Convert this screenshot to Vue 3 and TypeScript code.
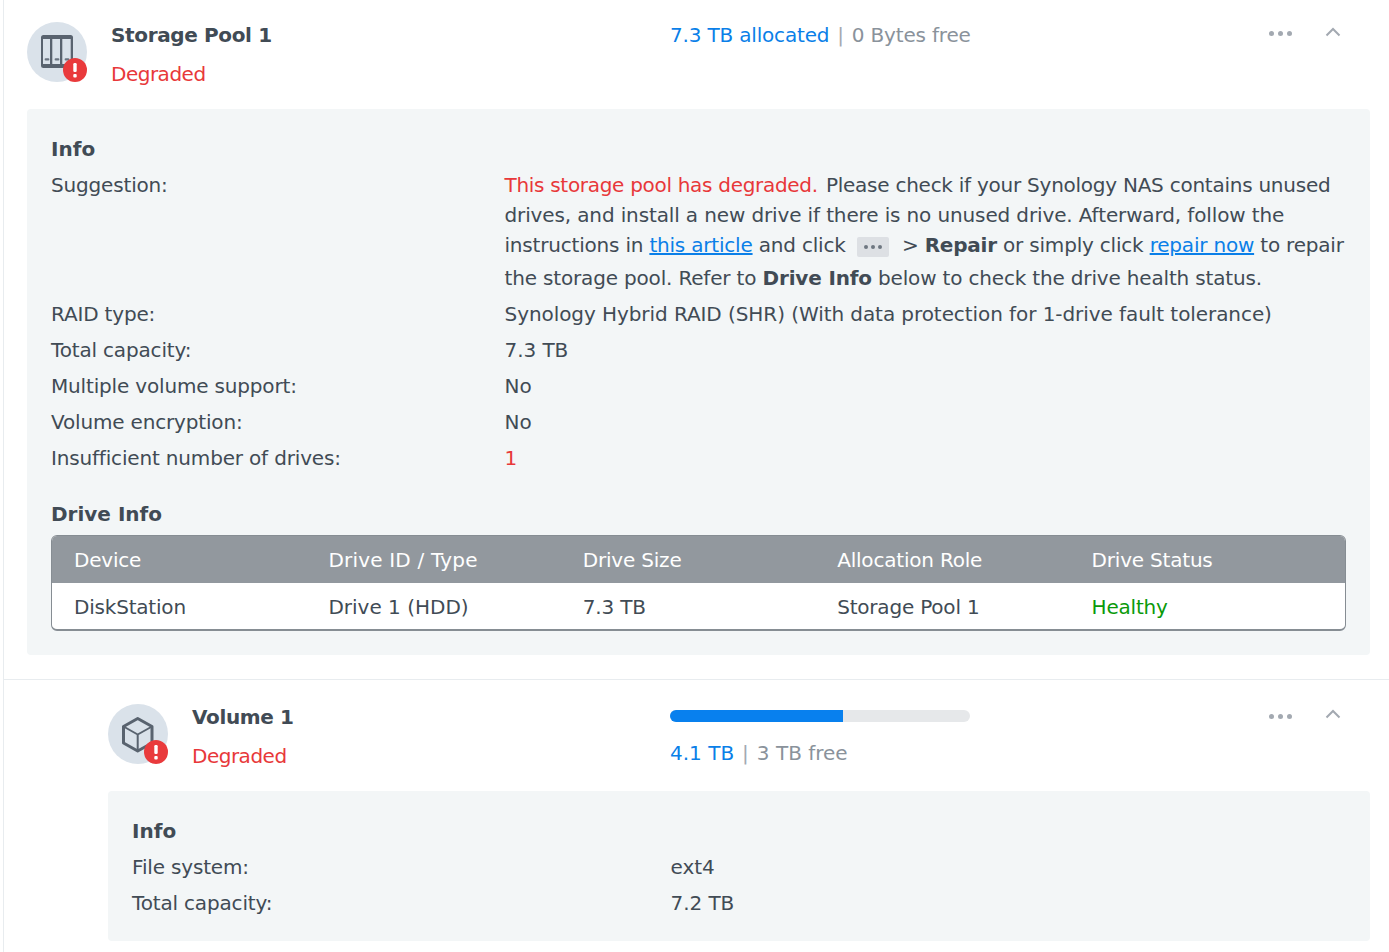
<script setup lang="ts">
const driveColumns = ['Device', 'Drive ID / Type', 'Drive Size', 'Allocation Role', 'Drive Status']
const poolRows = [
  { label: 'RAID type:', value: 'Synology Hybrid RAID (SHR) (With data protection for 1-drive fault tolerance)' },
  { label: 'Total capacity:', value: '7.3 TB' },
  { label: 'Multiple volume support:', value: 'No' },
  { label: 'Volume encryption:', value: 'No' },
  { label: 'Insufficient number of drives:', value: '1', danger: true },
]
const volumeRows = [
  { label: 'File system:', value: 'ext4' },
  { label: 'Total capacity:', value: '7.2 TB' },
]
const usedPercent = 57.7
</script>

<template>
  <main class="page">
    <section class="pool">
      <header class="head">
        <div class="avatar">
          <svg class="glyph" width="60" height="60" viewBox="0 0 60 60">
            <rect x="14" y="13" width="32" height="33" rx="2.500" fill="#59636f" />
            <path d="M16 17h7v25h-7ZM25.300 17h7.700v25h-7.700ZM35.300 17h8.400v25h-8.400Z" fill="#dae2ea" />
            <path d="M18.700 37.400h2.600M28.700 37.400h2.600M38.700 37.400h2.600" stroke="#6b7480" stroke-width="2.200" stroke-linecap="round" />
            <circle cx="48" cy="48" r="12" fill="#e93a3c" />
            <rect x="46.300" y="41" width="3.400" height="9" rx="1.200" fill="#fff" />
            <rect x="46.300" y="52" width="3.400" height="3.400" rx="1" fill="#fff" />
          </svg>
        </div>
        <div class="names">
          <strong class="name">Storage Pool 1</strong>
          <span class="danger status">Degraded</span>
        </div>
        <div class="usage pool-usage">
          <span class="blue">7.3 TB allocated</span><span class="sep">|</span><span class="muted">0 Bytes free</span>
        </div>
        <div class="actions">
          <span class="dots"><i></i><i></i><i></i></span>
          <svg class="chev" width="16" height="10" viewBox="0 0 16 10" fill="none"><path d="M1.500 8.500 8 2l6.500 6.500" stroke="#a3a9b1" stroke-width="2" /></svg>
        </div>
      </header>

      <div class="panel pool-panel">
        <h3>Info</h3>
        <div class="row suggestion">
          <span class="label">Suggestion:</span>
          <p class="value">
            <span class="line l1"><span class="danger lead">This storage pool has degraded.</span> Please check if your Synology NAS contains unused</span>
            <span class="line l2">drives, and install a new drive if there is no unused drive. Afterward, follow the</span>
            <span class="line l3">instructions in <a>this article</a> and click <span class="more"><i></i><i></i><i></i></span> &gt; <b>Repair</b> or simply click <a>repair now</a> to repair</span>
            <span class="line l4">the storage pool. Refer to <b>Drive Info</b> below to check the drive health status.</span>
          </p>
        </div>
        <div v-for="r in poolRows" :key="r.label" class="row">
          <span class="label">{{ r.label }}</span>
          <span class="value" :class="{ danger: r.danger }">{{ r.value }}</span>
        </div>

        <h3 class="drive-title">Drive Info</h3>
        <div class="table">
          <div class="tr th"><span v-for="c in driveColumns" :key="c">{{ c }}</span></div>
          <div class="tr td">
            <span>DiskStation</span><span>Drive 1 (HDD)</span><span>7.3 TB</span><span>Storage Pool 1</span><span class="green">Healthy</span>
          </div>
        </div>
      </div>

      <div class="divider"></div>

      <section class="volume">
        <header class="head vol-head">
          <div class="avatar">
            <svg class="glyph" width="60" height="60" viewBox="0 0 60 60" fill="none" stroke="#59636f" stroke-linejoin="round">
              <path d="M29.700 14.500 44 22.500v16.500L29.700 47 15.500 39V22.500Z" stroke-width="3" />
              <path d="M15.500 22.500 29.700 30.500 44 22.500M29.700 30.500V47" stroke-width="2" />
              <circle cx="48" cy="48" r="12" fill="#e93a3c" stroke="none" />
              <rect x="46.300" y="41" width="3.400" height="9" rx="1.200" fill="#fff" stroke="none" />
              <rect x="46.300" y="52" width="3.400" height="3.400" rx="1" fill="#fff" stroke="none" />
            </svg>
          </div>
          <div class="names">
            <strong class="name">Volume 1</strong>
            <span class="danger status">Degraded</span>
          </div>
          <div class="vol-usage">
            <div class="bar"><div class="fill" :style="{ width: usedPercent + '%' }"></div></div>
            <div class="usage"><span class="blue">4.1 TB</span><span class="sep">|</span><span class="muted">3 TB free</span></div>
          </div>
          <div class="actions">
            <span class="dots"><i></i><i></i><i></i></span>
            <svg class="chev" width="16" height="10" viewBox="0 0 16 10" fill="none"><path d="M1.500 8.500 8 2l6.500 6.500" stroke="#a3a9b1" stroke-width="2" /></svg>
          </div>
        </header>
        <div class="panel vol-panel">
          <h3>Info</h3>
          <div v-for="r in volumeRows" :key="r.label" class="row vrow">
            <span class="label">{{ r.label }}</span>
            <span class="value">{{ r.value }}</span>
          </div>
        </div>
      </section>
    </section>
  </main>
</template>

<style>
html, body { margin: 0; background: #fff; overflow: hidden; }
</style>

<style scoped>
.page {
  height: 952px;
  overflow: hidden;
  font-family: "DejaVu Sans", Verdana, sans-serif;
  font-size: 20px;
  color: #414b55;
  background: #fff;
  box-sizing: border-box;
  padding-left: 3px;
}
.pool { border-left: 1px solid #e8ecef; height: 952px; padding-left: 23px; box-sizing: border-box; }
.head { display: flex; height: 109px; position: relative; }
.avatar {
  width: 60px; height: 60px; margin-top: 22px; border-radius: 50%;
  background: #dae2ea; position: relative; flex: none;
}
.glyph { display: block; }
.names { margin-left: 24px; display: flex; flex-direction: column; width: 559px; flex: none; }
.name { margin-top: 20px; line-height: 30px; font-weight: 700; color: #414b55; letter-spacing: -0.36px; }
.status { line-height: 30px; margin-top: 9px; letter-spacing: -0.5px; }
.usage { line-height: 30px; letter-spacing: -0.18px; }
.pool-usage { margin-top: 20px; width: 590px; flex: none; }
.blue { color: #0a7fe8; }
.sep { color: #a3a9b1; margin: 0 8px; }
.muted { color: #8a929b; }
.actions { display: flex; align-items: center; gap: 33px; position: absolute; left: 1242px; top: 26px; height: 14px; }
.chev { margin-top: -2px; }
.dots { display: flex; gap: 4px; }
.dots i { width: 5px; height: 5px; border-radius: 50%; background: #a3a9b1; display: block; }
.danger { color: #e8383a; }
.panel { background: #f3f6f7; border-radius: 4px; box-sizing: border-box; }
.pool-panel { width: 1343px; height: 546px; padding: 25px 24px 0; }
h3 { margin: 0; font-size: 20px; font-weight: 700; line-height: 30px; color: #414b55; }
.row { display: flex; min-height: 36px; line-height: 36px; }
.label { width: 453.500px; flex: none; letter-spacing: -0.17px; }
.value { margin: 0; letter-spacing: -0.07px; }
.suggestion { line-height: 30px; margin-bottom: 3px; padding-top: 6px; }
.line { display: block; white-space: nowrap; }
.l1 { letter-spacing: -0.25px; }
.lead { letter-spacing: -0.3px; margin-right: 2px; }
.l2 { letter-spacing: -0.13px; }
.l3 { letter-spacing: -0.2px; height: 33px; }
.l4 { letter-spacing: -0.17px; }
a { color: #0a7fe8; text-decoration: underline; }
b { font-weight: 700; }
.more {
  display: inline-flex; gap: 3px; width: 32px; height: 20px; background: #dde0e4; border-radius: 2px;
  align-items: center; justify-content: center; vertical-align: 3px; margin: 0 7px 0 5px;
}
.more i { width: 4px; height: 4px; border-radius: 50%; background: #6e7781; display: block; }
.drive-title { margin-top: 23px; line-height: 30px; }
.table { margin-top: 6px; border-radius: 6px; overflow: hidden; border: 1px solid #868d93; border-bottom-width: 2px; background: #fff; box-sizing: border-box; }
.tr { display: grid; grid-template-columns: repeat(5, 254.400px); padding-left: 22px; align-items: center; letter-spacing: -0.2px; }
.th { height: 47px; background: #92989e; color: #fff; }
.th span:nth-child(2) { letter-spacing: 0.2px; }
.td { height: 46px; padding-top: 2px; box-sizing: border-box; }
.td span:nth-child(2) { letter-spacing: 0; }
.green { color: #0a9a0a; }
.divider { height: 1px; background: #e8ecef; margin: 24px 0 0 -23px; }
.volume { padding-left: 81px; }
.vol-head { height: 111px; }
.vol-head .avatar { margin-top: 24px; }
.vol-head .name { margin-top: 22px; }
.vol-usage { width: 590px; flex: none; margin-top: 30px; }
.vol-usage .usage { margin-top: 16px; letter-spacing: 0; }
.vol-head .names { width: 478px; }
.bar { width: 300px; height: 12px; border-radius: 6px; background: #e6e8ea; overflow: hidden; }
.fill { height: 100%; background: #0880ee; }
.vol-head .actions { left: 1161px; top: 29px; }
.vol-head .chev { margin-top: -5px; }
.vol-panel { width: 1262px; height: 150px; padding: 25px 24px 0; }
.vrow:first-of-type { margin-top: 3px; }
.vrow .label { width: 538.500px; }
</style>
